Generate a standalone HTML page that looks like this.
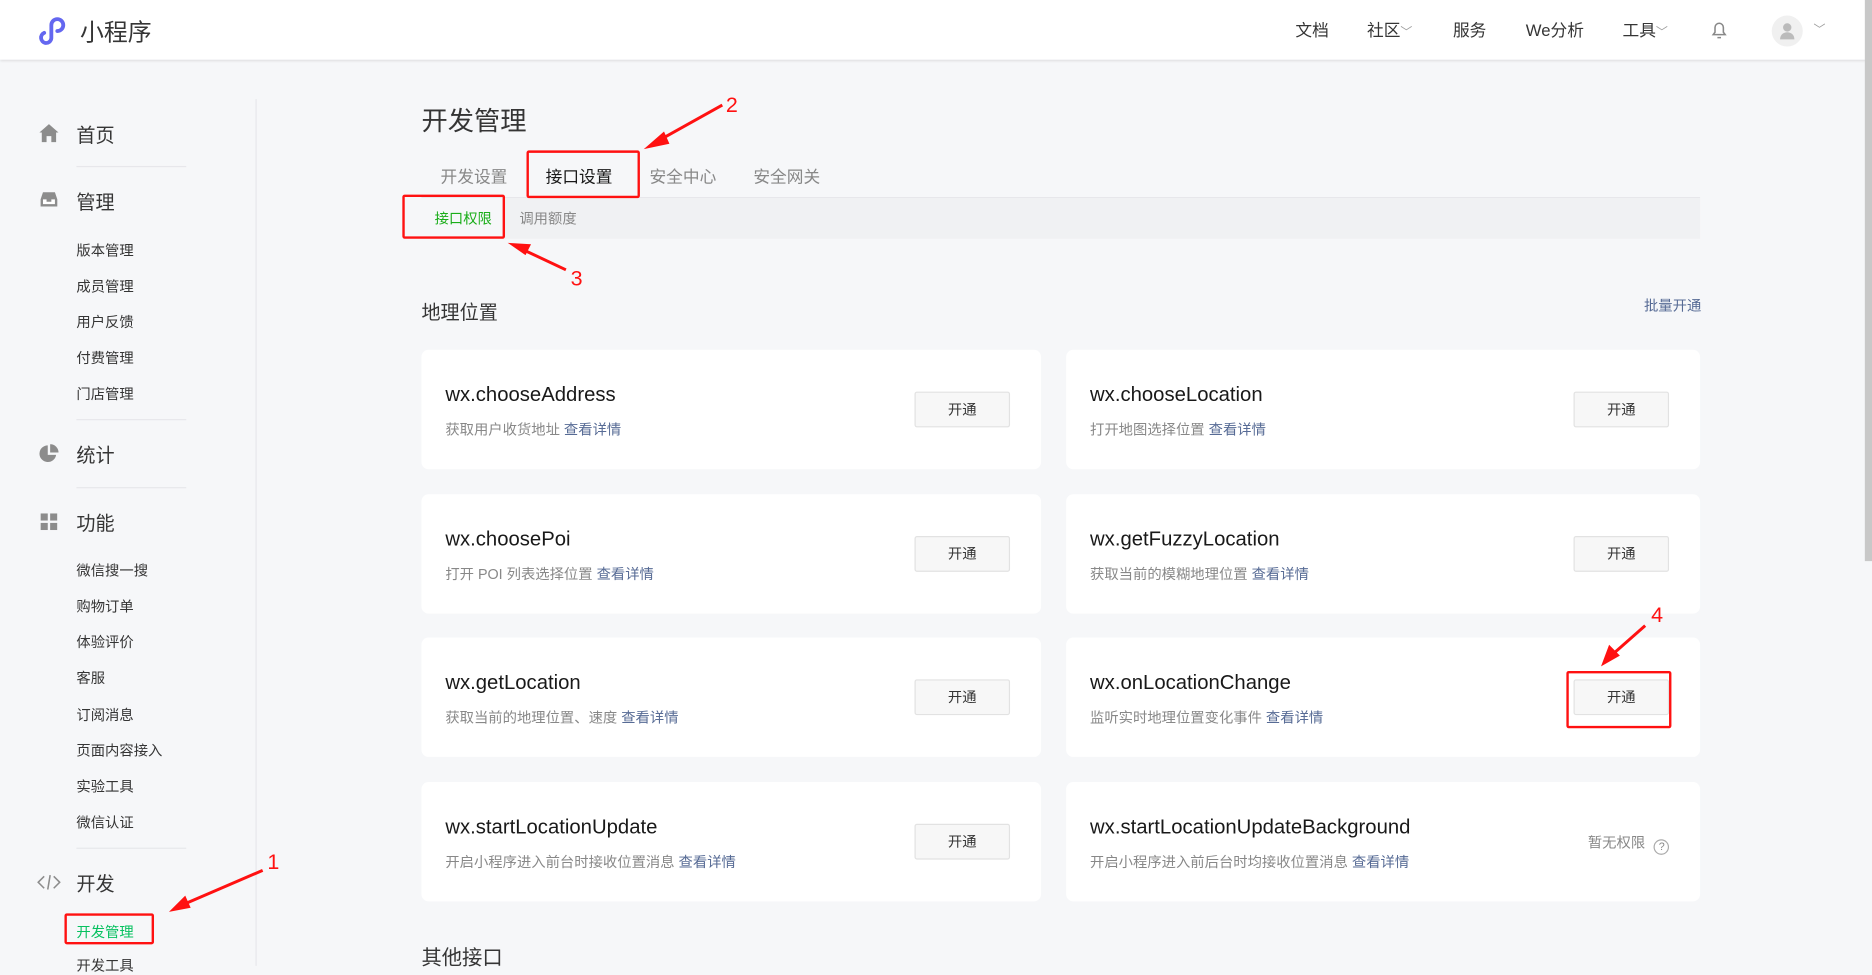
<!DOCTYPE html>
<html><head><meta charset="utf-8"><style>
*{margin:0;padding:0;box-sizing:border-box}
html,body{width:1872px;height:966px;overflow:hidden;background:#f6f7f9;font-family:"Liberation Sans","Noto Sans CJK SC",sans-serif;color:#353535}
#w{position:absolute;left:0;top:0;width:1568px;height:809px;transform:scale(1.19388);transform-origin:0 0}
.a{position:absolute;white-space:nowrap}
.hdr{position:absolute;left:0;top:0;width:1568px;height:50px;background:#fff;box-shadow:0 1px 2px rgba(0,0,0,.1)}
.nav{font-size:14px;color:#353535;top:15px}
.side{font-size:16px;color:#353535}
.sub{font-size:12px;color:#353535}
.hr{position:absolute;left:64px;width:92px;height:1px;background:#e7e7eb}
.card{position:absolute;background:#fff;border-radius:6px}
.card .t{position:absolute;left:20px;top:28px;font-size:17px;color:#191919}
.card .d{position:absolute;left:20px;top:58px;font-size:12px;color:#888}
.card .d b{font-weight:normal;color:#576b95}
.btn{position:absolute;left:413px;top:35px;width:80px;height:30px;border:1px solid #e2e2e2;background:#f7f7f7;border-radius:2px;font-size:12px;text-align:center;line-height:28px;color:#353535}
.c2 .btn{left:425px}
.red{position:absolute;border:2px solid #f11;border-radius:2px}
</style></head><body><div id="w">
<div class="hdr"></div>
<svg class="a" style="left:32px;top:13px" width="28" height="26" viewBox="0 0 28 26"><path d="M6 23a4.5 4.5 0 0 1-1-8.5M6 23a4.5 4.5 0 0 0 5-4V8a5 5 0 1 1 5 5" fill="none" stroke="#6467f0" stroke-width="3.2" stroke-linecap="round"/></svg>
<div class="a" style="left:67px;top:11px;font-size:20px;color:#353535">小程序</div>
<div class="a nav" style="left:1085px">文档</div>
<div class="a nav" style="left:1145px">社区<span style="font-size:10px;color:#999">﹀</span></div>
<div class="a nav" style="left:1217px">服务</div>
<div class="a nav" style="left:1278px">We分析</div>
<div class="a nav" style="left:1359px">工具<span style="font-size:10px;color:#999">﹀</span></div>
<svg class="a" style="left:1433px;top:16px" width="14" height="18" viewBox="0 0 14 18"><path d="M2 13h10l-1.5-2V7a3.5 3.5 0 0 0-7 0v4zM5.5 15.5h3" fill="none" stroke="#888" stroke-width="1.3"/></svg>
<div class="a" style="left:1484px;top:13px;width:26px;height:26px;border-radius:50%;background:#f0f0f0"></div>
<svg class="a" style="left:1489px;top:17px" width="16" height="18" viewBox="0 0 16 18"><circle cx="8" cy="6" r="3.5" fill="#bbb"/><path d="M2 16c0-4 3-6 6-6s6 2 6 6z" fill="#bbb"/></svg>
<div class="a" style="left:1519px;top:16px;font-size:10px;color:#999">﹀</div>
<div class="a" style="left:1562px;top:0;width:6px;height:470px;background:#c8c8c8"></div>

<div class="a" style="left:214px;top:83px;width:1px;height:726px;background:#e7e7eb"></div>
<svg class="a" style="left:32px;top:103px" width="18" height="17" viewBox="0 0 18 17"><path d="M9 1 1 8h2v8h4v-5h4v5h4V8h2z" fill="#8c8c8c"/></svg>
<div class="a side" style="left:64px;top:100px">首页</div>
<div class="hr" style="top:139px"></div>
<svg class="a" style="left:33px;top:159px" width="16" height="16" viewBox="0 0 16 16"><path d="M1 8 3 2h10l2 6v6H1z" fill="#8c8c8c"/><path d="M3 8h3v2h4V8h3v4H3z" fill="#fff"/></svg>
<div class="a side" style="left:64px;top:156px">管理</div>
<div class="a sub" style="left:64px;top:201px">版本管理</div>
<div class="a sub" style="left:64px;top:231px">成员管理</div>
<div class="a sub" style="left:64px;top:261px">用户反馈</div>
<div class="a sub" style="left:64px;top:291px">付费管理</div>
<div class="a sub" style="left:64px;top:321px">门店管理</div>
<div class="hr" style="top:351px"></div>
<svg class="a" style="left:33px;top:372px" width="16" height="16" viewBox="0 0 16 16"><path d="M7 1a7 7 0 1 0 7 8H7z" fill="#8c8c8c"/><path d="M9 0v7h7A7 7 0 0 0 9 0z" fill="#8c8c8c"/></svg>
<div class="a side" style="left:64px;top:368px">统计</div>
<div class="hr" style="top:408px"></div>
<svg class="a" style="left:34px;top:430px" width="14" height="14" viewBox="0 0 14 14"><rect width="6" height="6" fill="#8c8c8c"/><rect x="8" width="6" height="6" fill="#8c8c8c"/><rect y="8" width="6" height="6" fill="#8c8c8c"/><rect x="8" y="8" width="6" height="6" fill="#8c8c8c"/></svg>
<div class="a side" style="left:64px;top:425px">功能</div>
<div class="a sub" style="left:64px;top:469px">微信搜一搜</div>
<div class="a sub" style="left:64px;top:499px">购物订单</div>
<div class="a sub" style="left:64px;top:529px">体验评价</div>
<div class="a sub" style="left:64px;top:559px">客服</div>
<div class="a sub" style="left:64px;top:590px">订阅消息</div>
<div class="a sub" style="left:64px;top:620px">页面内容接入</div>
<div class="a sub" style="left:64px;top:650px">实验工具</div>
<div class="a sub" style="left:64px;top:680px">微信认证</div>
<div class="hr" style="top:710px"></div>
<svg class="a" style="left:31px;top:731px" width="20" height="16" viewBox="0 0 20 16"><path d="M6 3 1 8l5 5M14 3l5 5-5 5M11 2 9 14" fill="none" stroke="#8c8c8c" stroke-width="1.3"/></svg>
<div class="a side" style="left:64px;top:727px">开发</div>
<div class="a sub" style="left:64px;top:772px;color:#07c160">开发管理</div>
<div class="a sub" style="left:64px;top:800px">开发工具</div>

<div class="a" style="left:353px;top:84px;font-size:22px;color:#353535">开发管理</div>
<div class="a" style="left:369px;top:138px;font-size:14px;color:#888">开发设置</div>
<div class="a" style="left:457px;top:138px;font-size:14px;color:#191919">接口设置</div>
<div class="a" style="left:544px;top:138px;font-size:14px;color:#888">安全中心</div>
<div class="a" style="left:631px;top:138px;font-size:14px;color:#888">安全网关</div>
<div class="a" style="left:353px;top:165px;width:1071px;height:1px;background:#e7e7eb"></div>
<div class="a" style="left:353px;top:166px;width:1071px;height:34px;background:#f0f1f3"></div>
<div class="a" style="left:353px;top:166px;width:68px;height:34px;background:#f6f7f9"></div>
<div class="a" style="left:364px;top:174px;font-size:12px;color:#1aad19">接口权限</div>
<div class="a" style="left:435px;top:174px;font-size:12px;color:#888">调用额度</div>

<div class="a" style="left:353px;top:248px;font-size:16px;color:#353535">地理位置</div>
<div class="a" style="left:1377px;top:247px;font-size:12px;color:#576b95">批量开通</div>

<div class="card" style="left:353px;top:293px;width:519px;height:100px"><div class="t">wx.chooseAddress</div><div class="d">获取用户收货地址 <b>查看详情</b></div><div class="btn">开通</div></div>
<div class="card c2" style="left:893px;top:293px;width:531px;height:100px"><div class="t">wx.chooseLocation</div><div class="d">打开地图选择位置 <b>查看详情</b></div><div class="btn">开通</div></div>
<div class="card" style="left:353px;top:414px;width:519px;height:100px"><div class="t">wx.choosePoi</div><div class="d">打开 POI 列表选择位置 <b>查看详情</b></div><div class="btn">开通</div></div>
<div class="card c2" style="left:893px;top:414px;width:531px;height:100px"><div class="t">wx.getFuzzyLocation</div><div class="d">获取当前的模糊地理位置 <b>查看详情</b></div><div class="btn">开通</div></div>
<div class="card" style="left:353px;top:534px;width:519px;height:100px"><div class="t">wx.getLocation</div><div class="d">获取当前的地理位置、速度 <b>查看详情</b></div><div class="btn">开通</div></div>
<div class="card c2" style="left:893px;top:534px;width:531px;height:100px"><div class="t">wx.onLocationChange</div><div class="d">监听实时地理位置变化事件 <b>查看详情</b></div><div class="btn">开通</div></div>
<div class="card" style="left:353px;top:655px;width:519px;height:100px"><div class="t">wx.startLocationUpdate</div><div class="d">开启小程序进入前台时接收位置消息 <b>查看详情</b></div><div class="btn">开通</div></div>
<div class="card c2" style="left:893px;top:655px;width:531px;height:100px"><div class="t">wx.startLocationUpdateBackground</div><div class="d">开启小程序进入前后台时均接收位置消息 <b>查看详情</b></div>
<div class="a" style="left:437px;top:42px;font-size:12px;color:#888">暂无权限 <span style="display:inline-block;width:13px;height:13px;border:1px solid #aaa;border-radius:50%;font-size:9px;line-height:11px;text-align:center;margin-left:4px;vertical-align:-2px">?</span></div></div>

<div class="a" style="left:353px;top:788px;font-size:17px;color:#353535">其他接口</div>

<div class="red" style="left:337px;top:163px;width:86px;height:37px"></div>
<div class="red" style="left:441px;top:126px;width:95px;height:40px"></div>
<div class="red" style="left:1312px;top:562px;width:88px;height:48px"></div>
<div class="red" style="left:54px;top:765px;width:75px;height:26px"></div>
<svg class="a" style="left:0;top:0" width="1568" height="809" viewBox="0 0 1568 809">
<g fill="#f11" stroke="#f11">
<path d="M605 88 553 117" stroke-width="2.5"/><path d="M541 124 556 111 560 120z"/>
<path d="M474 226 440 210" stroke-width="2.5"/><path d="M427 204 444 205 440 213z"/>
<path d="M1378 524 1352 547" stroke-width="2.5"/><path d="M1342 557 1348 541 1356 549z"/>
<path d="M220 729 155 757" stroke-width="2.5"/><path d="M143 763 155 751 159 760z"/>
</g>
<g fill="#f11" font-family="Liberation Sans" font-size="18"><text x="608" y="94">2</text><text x="478" y="239">3</text><text x="1383" y="521">4</text><text x="224" y="728">1</text></g>
</svg>
</div></body></html>
